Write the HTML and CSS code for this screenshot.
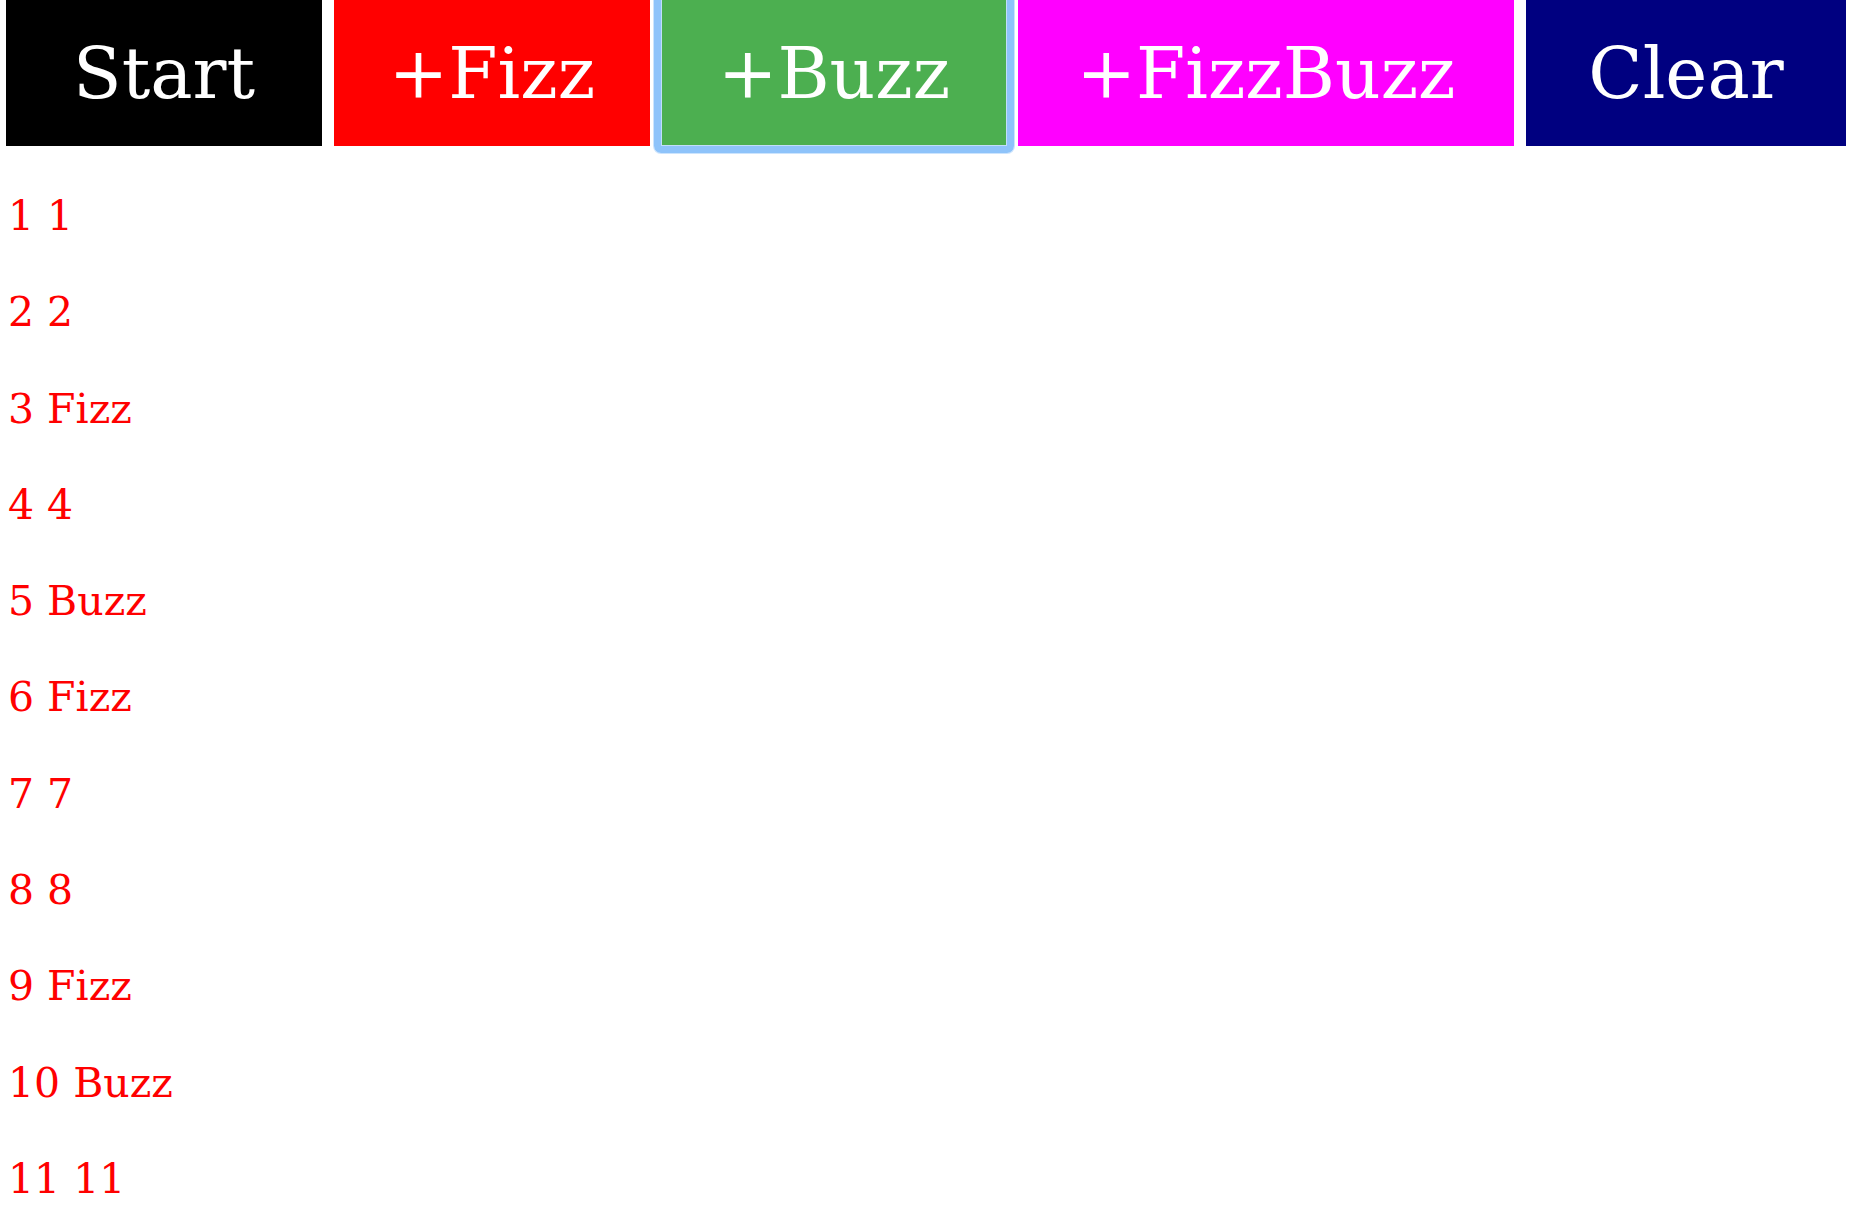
FILE: index.html
```html
<!DOCTYPE html>
<html>
<head>
<meta charset="utf-8">
<title>FizzBuzz</title>
<link rel="stylesheet" href="styles.css">
</head>
<body>
<div class="toolbar">
  <button class="btn btn-start">Start</button>
  <button class="btn btn-fizz">+Fizz</button>
  <button class="btn btn-buzz is-focused">+Buzz</button>
  <button class="btn btn-fizzbuzz">+FizzBuzz</button>
  <button class="btn btn-clear">Clear</button>
</div>
<div class="output">
  <div class="line">1 1</div>
  <div class="line">2 2</div>
  <div class="line">3 Fizz</div>
  <div class="line">4 4</div>
  <div class="line">5 Buzz</div>
  <div class="line">6 Fizz</div>
  <div class="line">7 7</div>
  <div class="line">8 8</div>
  <div class="line">9 Fizz</div>
  <div class="line">10 Buzz</div>
  <div class="line">11 11</div>
</div>
</body>
</html>
```
FILE: styles.css
```css
html, body {
  margin: 0;
  padding: 0;
  background: #ffffff;
}

body {
  font-family: "DejaVu Serif", "Liberation Serif", serif;
  overflow: hidden;
}

.toolbar {
  display: flex;
  gap: 12px;
  padding: 0 6px;
}

.btn {
  flex: 0 0 auto;
  height: 146px;
  padding: 0;
  margin: 0;
  border: none;
  border-radius: 0;
  color: #ffffff;
  font-family: "DejaVu Serif", "Liberation Serif", serif;
  font-size: 71px;
  line-height: 1;
  text-align: center;
  cursor: pointer;
  position: relative;
}

.btn-start { width: 316px; background: #000000; }
.btn-fizz { width: 316px; background: #ff0000; }
.btn-buzz { width: 344px; background: #4caf50; }
.btn-fizzbuzz { width: 496px; background: #ff00ff; }
.btn-clear { width: 320px; background: #000080; }

.is-focused::after {
  content: "";
  position: absolute;
  left: -8px;
  right: -8px;
  top: -8px;
  bottom: -7px;
  border: 7px solid #8ec3fa;
  border-radius: 7px;
  box-shadow: inset 0 0 0 1px #c2def9, 0 0 0 1px rgba(142, 195, 250, 0.45);
  pointer-events: none;
}

.output {
  margin-top: 22px;
  padding: 0 8px;
}

.line {
  color: #ff0000;
  font-size: 41px;
  line-height: 96.3px;
}
```
